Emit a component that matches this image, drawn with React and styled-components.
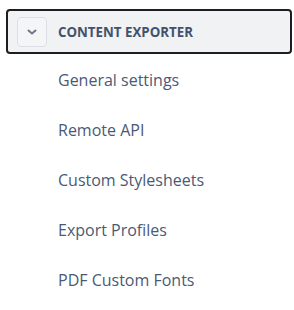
import React from "react";
import styled, { createGlobalStyle } from "styled-components";

const Global = createGlobalStyle`
  body {
    margin: 0;
    background: #fff;
    font-family: "Open Sans", "Noto Sans", sans-serif;
  }
`;

const Wrapper = styled.nav`
  width: 294px;
  padding: 9px 2px 0 6px;
  box-sizing: border-box;
`;

const Header = styled.div`
  display: flex;
  align-items: center;
  height: 45px;
  box-sizing: border-box;
  padding: 0 9px;
  gap: 11px;
  background: #f1f2f4;
  border: 2px solid #1c1e21;
  border-radius: 4px;
`;

const Toggle = styled.button`
  display: flex;
  align-items: center;
  justify-content: center;
  width: 30px;
  height: 30px;
  padding: 0;
  background: #f4f5f7;
  border: 1px solid #dcdfe4;
  border-radius: 4px;
  color: #6b778c;
`;

const Title = styled.span`
  font-size: 13.3px;
  font-weight: 700;
  color: #42526e;
  text-transform: uppercase;
`;

const List = styled.ul`
  list-style: none;
  margin: 0;
  padding: 1px 0 0 52px;
`;

const Item = styled.li`
  height: 50px;
  display: flex;
  align-items: center;
  font-size: 16px;
  color: #4a5a75;
`;

const items = [
  "General settings",
  "Remote API",
  "Custom Stylesheets",
  "Export Profiles",
  "PDF Custom Fonts",
];

export default function App() {
  return (
    <>
      <Global />
      <Wrapper>
        <Header>
          <Toggle>
            <svg width="12" height="12" viewBox="0 0 12 12">
              <path d="M2.5 4.5 L6 7.5 L9.5 4.5" fill="none" stroke="currentColor" strokeWidth="2" strokeLinecap="round" strokeLinejoin="round" />
            </svg>
          </Toggle>
          <Title>Content Exporter</Title>
        </Header>
        <List>
          {items.map((label) => (
            <Item key={label}>{label}</Item>
          ))}
        </List>
      </Wrapper>
    </>
  );
}
